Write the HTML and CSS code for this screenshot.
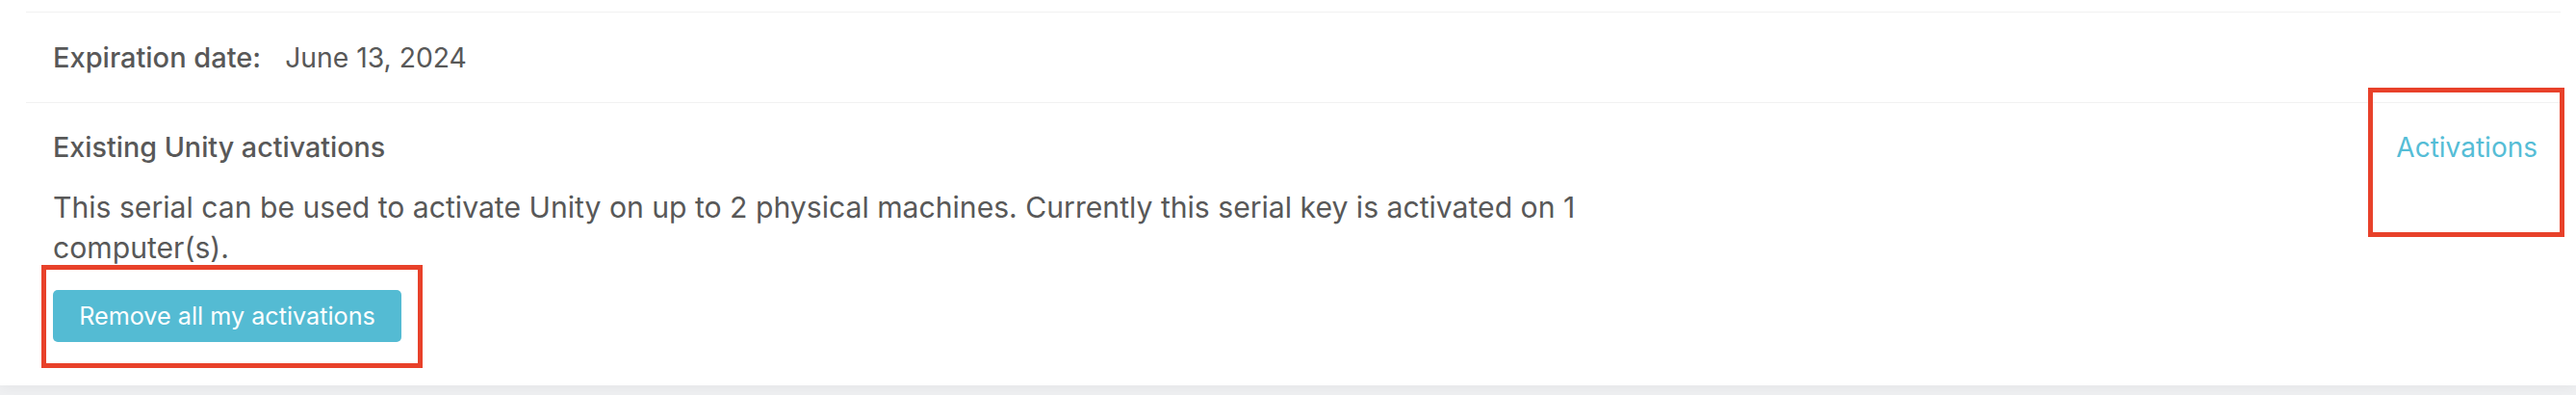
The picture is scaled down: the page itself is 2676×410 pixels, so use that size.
FILE: index.html
```html
<!DOCTYPE html>
<html lang="en">
<head>
<meta charset="utf-8">
<title>Serial activations</title>
<link rel="stylesheet" href="styles.css">
</head>
<body>
<div class="card">
  <div class="row row-expiration">
    <span class="label">Expiration date:</span>
    <span class="value">June 13, 2024</span>
  </div>
  <div class="row row-activations">
    <div class="main">
      <h3 class="heading">Existing Unity activations</h3>
      <p class="desc">This serial can be used to activate Unity on up to 2 physical machines. Currently this serial key is activated on 1 computer(s).</p>
      <div class="btn-wrap">
        <button class="btn">Remove all my activations</button>
        <span class="highlight highlight-btn"></span>
      </div>
    </div>
    <div class="side">
      <a class="link" href="#">Activations</a>
      <span class="highlight highlight-link"></span>
    </div>
  </div>
</div>
</body>
</html>
```

FILE: styles.css
```css
html, body {
  margin: 0;
  padding: 0;
}
body {
  background: #eff0f2;
  font-family: Inter, "Noto Sans", "Liberation Sans", sans-serif;
  color: #585858;
  width: 2676px;
  height: 410px;
  overflow: hidden;
}
.card {
  background: #ffffff;
  padding-top: 12px;
  height: 388px;
  box-shadow: 0 2px 14px rgba(0, 0, 0, 0.05);
}
.row {
  border-top: 1px solid #f1f1f1;
  margin-left: 27px;
  margin-right: 16px;
  padding-left: 28px;
  padding-right: 24px;
}
.row-expiration {
  padding-top: 27px;
  padding-bottom: 26px;
  line-height: 40px;
  display: flex;
  gap: 25px;
}
.label {
  font-size: 29px;
  font-weight: 500;
}
.value {
  font-size: 28.3px;
  font-weight: 400;
}
.row-activations {
  display: flex;
  justify-content: space-between;
  padding-top: 26px;
}
.main {
  width: 1660px;
}
.heading {
  margin: 0;
  font-size: 28.7px;
  line-height: 40px;
  font-weight: 500;
}
.desc {
  margin: 21px 0 0 0;
  font-size: 30.15px;
  line-height: 42px;
  font-weight: 400;
}
.btn-wrap {
  position: relative;
  margin-top: 23px;
  width: max-content;
}
.btn {
  display: block;
  height: 54px;
  width: 362px;
  padding: 0;
  border: none;
  border-radius: 5px;
  background: #54bbd3;
  color: #ffffff;
  font-family: Inter, "Noto Sans", "Liberation Sans", sans-serif;
  font-size: 25.2px;
  font-weight: 400;
  cursor: pointer;
}
.side {
  position: relative;
}
.link {
  display: block;
  font-size: 28px;
  line-height: 40px;
  color: #55bdd6;
  text-decoration: none;
}
.highlight {
  position: absolute;
  border: 5px solid #e8412a;
  box-sizing: border-box;
  pointer-events: none;
}
.highlight-btn {
  left: -12px;
  top: -26px;
  width: 396px;
  height: 107px;
}
.highlight-link {
  right: -28px;
  top: -42px;
  width: 204px;
  height: 155px;
}
```
